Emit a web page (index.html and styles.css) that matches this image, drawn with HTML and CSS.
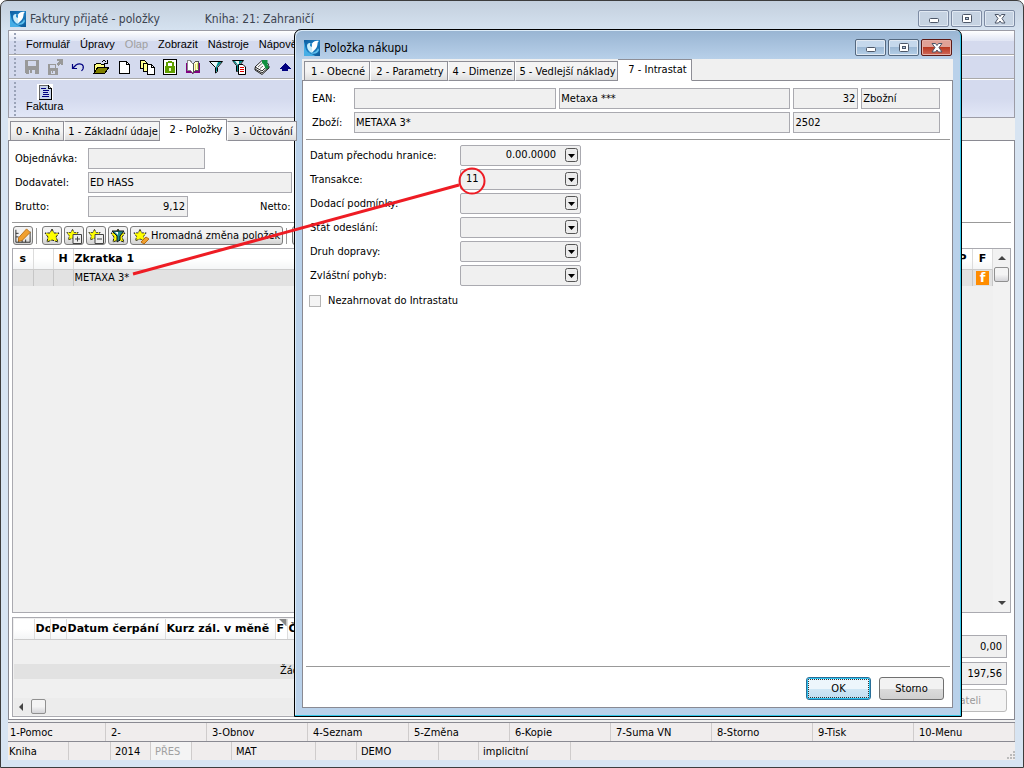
FILE: index.html
```html
<!DOCTYPE html>
<html lang="cs">
<head>
<meta charset="utf-8">
<title>Faktury přijaté - položky</title>
<link rel="stylesheet" href="styles.css">
</head>
<body>
<svg width="0" height="0" class="defs" aria-hidden="true">
  <defs>
    <linearGradient id="logo-bg" x1="0" y1="0" x2="1" y2="1">
      <stop offset="0" stop-color="#0d5c9e"/><stop offset=".5" stop-color="#1c7fc4"/><stop offset="1" stop-color="#0b5796"/>
    </linearGradient>
    <symbol id="logo" viewBox="0 0 16 16">
      <rect width="16" height="16" fill="url(#logo-bg)"/>
      <path d="M0 2C1 3 1 9 3 11C5 14 9 14 11 16H0Z" fill="#45aee6"/>
      <path d="M3 6C3 3 6 2 8 4C9 1 13 1 13 4C14 8 10 10 8 13C5 12 3 9 3 6Z" fill="#c9ecfa"/>
      <path d="M8 4C9 1 13 0 15 1C13 2 14 4 13 6C12 9 9 10 8 12C9 9 7 7 8 4Z" fill="#fff"/>
      <path d="M6 3L8 4V7L6 6Z" fill="#2a8acb"/>
      <path d="M4 12C8 14 13 12 14 8L15 10C14 14 9 15 4 12Z" fill="#5cc0ee"/>
    </symbol>
    <symbol id="star" viewBox="0 0 16 16">
      <path d="M8 1L10 5L15 5L12 9L14 14L8 12L3 14L4 9L1 5L6 5Z" fill="#ff0" stroke="#222" stroke-width="1" stroke-dasharray="3 1"/>
    </symbol>
    <symbol id="min" viewBox="0 0 12 10"><rect x="1.500" y="4.500" width="9" height="4" rx="1" fill="#fff" stroke="#4d5768"/></symbol>
    <symbol id="max" viewBox="0 0 12 10"><rect x="1.500" y=".5" width="9" height="8" rx="1" fill="#fff" stroke="#4d5768"/><rect x="4.500" y="3.500" width="3" height="2" fill="#b6c8de" stroke="#4d5768"/></symbol>
    <symbol id="close" viewBox="0 0 12 10"><path d="M1 .5H4.500L6 2.500L7.500 .5H11L8 4.500L11 9H7.500L6 7L4.500 9H1L4 4.500Z" fill="#fff" stroke="#4d5768"/></symbol>
    <symbol id="drop" viewBox="0 0 15 15">
      <rect x=".5" y=".5" width="12" height="13" rx="2" fill="#ececec" stroke="#555"/>
      <path d="M3 6H10L6.500 10Z" fill="#000"/>
    </symbol>
  </defs>
</svg>

<div class="window">
  <header class="titlebar">
    <svg class="logo"><use href="#logo"/></svg>
    <span class="title">Faktury přijaté - položky</span>
    <span class="subtitle">Kniha: 21: Zahraničí</span>
    <span class="winbuttons">
      <button aria-label="Minimalizovat"><svg><use href="#min"/></svg></button>
      <button aria-label="Maximalizovat"><svg><use href="#max"/></svg></button>
      <button aria-label="Zavřít"><svg><use href="#close"/></svg></button>
    </span>
  </header>

  <div class="client">
    <div class="bars">
      <nav class="menu">
        <button>Formulář</button><button>Úpravy</button><button disabled>Olap</button><button>Zobrazit</button><button>Nástroje</button><button>Nápověda</button>
      </nav>
      <div class="tools">
        <button aria-label="Uložit"><svg viewBox="0 0 16 16"><path d="M1 1H15V15H2L1 14Z" fill="#999"/><path d="M4 2H12V7H4ZM5 11H11V15H5Z" fill="#d3d9ec"/><path d="M6 11H8V14H6Z" fill="#999"/></svg></button>
        <button aria-label="Uložit a zavřít"><svg viewBox="0 0 16 16"><path d="M1 5H9V9H11V16H1ZM10 0H16V6H14V4L11 7L9 5L12 2H10Z" fill="#999"/><path d="M3 6H8V9H3ZM4 12H8V15H4Z" fill="#d3d9ec"/><path d="M5 12H6V14H5Z" fill="#999"/></svg></button>
        <button aria-label="Zpět"><svg viewBox="0 0 16 16" class="smooth"><path d="M2.500 5V9.500H7M3 9L6 6Q9 4 12 5.500Q14 7 13 10L11.500 12" fill="none" stroke="#000080" stroke-width="1.200"/></svg></button>
        <button aria-label="Otevřít"><svg viewBox="0 0 16 16"><path d="M1 14V5H3L4 4H7L8 5H11V8" fill="#ffff80" stroke="#000"/><path d="M1 14L5 8H16L12 14Z" fill="#808000" stroke="#000"/><path d="M9 3Q11 0 13 3M14 1V4H11" fill="none" stroke="#000"/></svg></button>
        <button aria-label="Nový"><svg viewBox="0 0 16 16"><path d="M3 2H10L13 5V14H3Z" fill="#fff" stroke="#000"/><path d="M10 2V5H13" fill="none" stroke="#000"/></svg></button>
        <button aria-label="Kopírovat"><svg viewBox="0 0 16 16"><path d="M1 1H5L7 3V9H1Z" fill="#ffff90" stroke="#000"/><path d="M4 4H8L10 6V12H4Z" fill="#ffff90" stroke="#000"/><path d="M8 5H12L15 8V15H8Z" fill="#fff" stroke="#000"/><path d="M12 5V8H15" fill="none" stroke="#000"/></svg></button>
        <button aria-label="Zámek"><svg viewBox="0 0 16 16"><rect x="1" y="0" width="14" height="16" fill="#000"/><rect x="2" y="1" width="12" height="14" fill="#fff"/><rect x="3" y="7" width="10" height="7" fill="#5f9e00"/><path d="M5 8V5Q5 3 8 3Q11 3 11 5V8" fill="none" stroke="#5f9e00" stroke-width="2"/><path d="M7 9H9V12H7Z" fill="#e8f4c0"/></svg></button>
        <button aria-label="Kniha"><svg viewBox="0 0 16 16"><path d="M2 4V13H7L8 14L9 13H14V4" fill="#800080" stroke="#800080" stroke-width="2"/><path d="M2 2L5 1L8 5V14L5 11H2Z" fill="#fff" stroke="#888"/><path d="M8 5L11 2H13V11H11L8 14Z" fill="#ffffd0" stroke="#555"/><path d="M10 5V11M12 4V10" stroke="#dd6"/></svg></button>
        <button aria-label="Filtr"><svg viewBox="0 0 16 16" class="smooth"><path d="M1.500 2.500H14.500L9.500 8.500V12.500L7.500 14V8.500Z" fill="#e9fafa" stroke="#000"/><path d="M10 3H13.500L9 8V12L8 13V8Z" fill="#008c8c"/></svg></button>
        <button aria-label="Filtr seznamu"><svg viewBox="0 0 16 16" class="smooth"><path d="M1.500 1.500H12.500L8.500 6.500V11.500L5.500 12.500V6.500Z" fill="#e9fafa" stroke="#000"/><path d="M8 2H11.500L8 6Z M2 2H4L7 6V12L6 12V6Z" fill="#008c8c"/><path d="M7.500 5.500H12L14.500 8V15.500H7.500Z" fill="#fff" stroke="#000"/><path d="M9 8.500H13M9 10.500H13M9 12.500H13" stroke="#d00"/></svg></button>
        <button aria-label="Tisk"><svg viewBox="0 0 16 16" class="smooth"><path d="M1 8.500V11L8 15.500L15 9V7Z" fill="#fff" stroke="#222"/><path d="M1 8L8 1.500L15 5.500L8 12Z" fill="#fff" stroke="#222"/><path d="M1 10L8 14L15 8" fill="none" stroke="#222"/><path d="M8 1H13.500V6L15 8.500L12 10.500L10 6L8 4Z" fill="#109040"/><path d="M4 8L8 4.500M6 9.500L9 7" stroke="#666"/></svg></button>
        <button aria-label="Nahoru"><svg viewBox="0 0 16 16"><path d="M8 4L14 10H11V12H5V10H2Z" fill="#000080"/></svg></button>
      </div>
      <div class="forms">
        <button><svg viewBox="0 0 16 16"><rect width="16" height="16" fill="#fff"/><path d="M2 1H11L14 4V15H2Z" fill="#c8d4ec" stroke="#666"/><path d="M14 4V15H2" fill="none" stroke="#000"/><path d="M11 1V4H14" fill="none" stroke="#000"/><path d="M4 4H9M6 6H12M6 8H11M6 10H12M5 12H12" stroke="#000080"/></svg><span>Faktura</span></button>
      </div>
    </div>

    <div class="tabs main-tabs" role="tablist">
      <button role="tab" class="t54">0 - Kniha</button><button role="tab" class="t95">1 - Základní údaje</button><button role="tab" class="t67 active">2 - Položky</button><button role="tab" class="t70">3 - Účtování</button>
    </div>

    <main class="panel">
      <div class="head-form">
        <label for="obj">Objednávka:</label><input id="obj" class="w117" readonly>
        <label for="dod">Dodavatel:</label><input id="dod" class="w204" value="ED HASS" readonly>
        <label for="bru">Brutto:</label><span class="pair"><input id="bru" class="w100 num" value="9,12" readonly><label for="net">Netto:</label><input id="net" class="w100 num" readonly></span>
      </div>

      <div class="actions">
        <button class="icon" aria-label="Upravit"><svg viewBox="0 0 18 16"><path d="M1 1V15H17V3M4 15V12M8 15V12M12 15V12M1 5H4M1 9H4" fill="none" stroke="#222"/><path d="M4 10L13 0L17 4L8 13L4 14Z" fill="#f0a030" stroke="#b86c10"/></svg></button>
        <i class="vsep"></i>
        <button class="icon" aria-label="Nová položka"><svg><use href="#star"/></svg></button>
        <button class="icon" aria-label="Přidat"><svg viewBox="0 0 16 16"><use href="#star" width="13" height="14"/><path d="M7 6.500H15.500V15.500H7ZM9 11H14M11.500 8.500V13.500" fill="#eee" stroke="#444"/></svg></button>
        <button class="icon" aria-label="Odebrat"><svg viewBox="0 0 16 16"><use href="#star" width="13" height="14"/><path d="M7 6.500H15.500V15.500H7ZM9 11H14" fill="#eee" stroke="#444"/></svg></button>
        <button class="icon" aria-label="Filtr položek"><svg viewBox="0 0 16 16"><use href="#star" width="16" height="16"/><path d="M2 3H14L10 8V12L7 14V8Z" fill="#208c8c" stroke="#111"/><path d="M5 4H8V7Z" fill="#fff"/></svg></button>
        <button class="wide"><svg viewBox="0 0 16 16"><use href="#star" width="14" height="15"/><path d="M8 14L13 9L16 11L11 16Z" fill="#f0a030" stroke="#b86c10"/></svg>Hromadná změna položek</button>
        <i class="vsep"></i>
        <button class="icon" aria-label="Další"></button>
      </div>

      <div class="grid-box">
        <table class="items">
          <colgroup><col class="c20"><col class="c20"><col class="c20"><col><col class="c20"><col class="c20"></colgroup>
          <thead><tr><th>s</th><th></th><th>H</th><th class="left">Zkratka 1</th><th>P</th><th>F</th></tr></thead>
          <tbody><tr><td></td><td></td><td></td><td class="left">METAXA 3*</td><td></td><td><span class="flag">f</span></td></tr></tbody>
        </table>
        <div class="vscroll"><svg viewBox="0 0 8 4"><path d="M0 4L4 0L8 4Z"/></svg><i class="thumb"></i><svg viewBox="0 0 8 4" class="end"><path d="M0 0L4 4L8 0Z"/></svg></div>
      </div>

      <div class="lower">
        <div class="sub-box">
          <table class="sub">
            <colgroup><col class="c20"><col class="c16"><col class="c16"><col class="c99"><col class="c110"><col class="c12"><col></colgroup>
            <thead><tr><th></th><th>Do</th><th>Po</th><th>Datum čerpání</th><th>Kurz zál. v měně</th><th class="sorted">F</th><th>Č</th></tr></thead>
          </table>
          <div class="empty">Žádné záznamy</div>
          <div class="hscroll"><svg viewBox="0 0 4 8"><path d="M4 0L0 4L4 8Z"/></svg><i class="thumb"></i></div>
        </div>
        <div class="totals">
          <input class="num" value="0,00" aria-label="Součet" readonly>
          <input class="num" value="197,56" aria-label="Celkem" readonly>
          <button disabled>Dodavateli</button>
        </div>
      </div>
    </main>

    <footer class="status">
      <div class="keys"><span>1-Pomoc</span><span>2-</span><span>3-Obnov</span><span>4-Seznam</span><span>5-Změna</span><span>6-Kopie</span><span>7-Suma VN</span><span>8-Storno</span><span>9-Tisk</span><span>10-Menu</span></div>
      <div class="state"><span class="s61">Kniha</span><span class="s42"></span><span class="s40">2014</span><span class="s41 dim">PŘES</span><span class="s40"></span><span class="s84">MAT</span><span class="s41"></span><span class="s82">DEMO</span><span class="s40"></span><span class="s92">implicitní</span><span class="rest"><svg viewBox="0 0 9 9"><path d="M7 0h2v2h-2zM7 3h2v2h-2zM4 3h2v2h-2zM7 6h2v2h-2zM4 6h2v2h-2zM1 6h2v2h-2z" fill="#bbb"/></svg></span></div>
    </footer>
  </div>
</div>

<section class="dialog" role="dialog" aria-label="Položka nákupu">
  <header class="titlebar">
    <svg class="logo"><use href="#logo"/></svg>
    <span class="title">Položka nákupu</span>
    <span class="winbuttons">
      <button aria-label="Minimalizovat"><svg><use href="#min"/></svg></button>
      <button aria-label="Maximalizovat"><svg><use href="#max"/></svg></button>
      <button class="red" aria-label="Zavřít"><svg><use href="#close"/></svg></button>
    </span>
  </header>
  <div class="dlg-body">
    <div class="tabs" role="tablist">
      <button role="tab" class="t66">1 - Obecné</button><button role="tab" class="t78">2 - Parametry</button><button role="tab" class="t67">4 - Dimenze</button><button role="tab" class="t103">5 - Vedlejší náklady</button><button role="tab" class="t74 active">7 - Intrastat</button>
    </div>
    <div class="dlg-panel">
      <div class="ident">
        <label for="ean">EAN:</label>
        <input id="ean" readonly>
        <input value="Metaxa ***" aria-label="Název" readonly>
        <input class="num" value="32" aria-label="Číslo" readonly>
        <input value="Zbožní" aria-label="Druh" readonly>
        <label for="zbo">Zboží:</label>
        <input id="zbo" class="span2" value="METAXA 3*" readonly>
        <input class="span2" value="2502" aria-label="Kód" readonly>
      </div>
      <div class="fields">
        <label for="f1">Datum přechodu hranice:</label><span class="combo"><select id="f1" class="num"><option>0.00.0000</option></select><svg><use href="#drop"/></svg></span>
        <label for="f2">Transakce:</label><span class="combo"><select id="f2"><option>11</option></select><svg><use href="#drop"/></svg></span>
        <label for="f3">Dodací podmínky:</label><span class="combo"><select id="f3"><option></option></select><svg><use href="#drop"/></svg></span>
        <label for="f4">Stát odeslání:</label><span class="combo"><select id="f4"><option></option></select><svg><use href="#drop"/></svg></span>
        <label for="f5">Druh dopravy:</label><span class="combo"><select id="f5"><option></option></select><svg><use href="#drop"/></svg></span>
        <label for="f6">Zvláštní pohyb:</label><span class="combo"><select id="f6"><option></option></select><svg><use href="#drop"/></svg></span>
      </div>
      <label class="check"><input type="checkbox">Nezahrnovat do Intrastatu</label>
      <div class="buttons"><button class="ok">OK</button><button>Storno</button></div>
    </div>
  </div>
</section>

<svg class="note" viewBox="0 0 370 125" aria-hidden="true"><path d="M8 114L334 25" stroke="#ee1c24" stroke-width="3"/><circle cx="347" cy="21" r="12.500" fill="none" stroke="#ee1c24" stroke-width="2"/></svg>
</body>
</html>
```
FILE: styles.css
```css
* { box-sizing: border-box; }
html, body { height: 100%; }
body {
  margin: 0;
  background: #fff;
  font: 11px/14px "DejaVu Sans Condensed", "Noto Sans", sans-serif;
  color: #000;
  position: relative;
  overflow: hidden;
}
button, input, select { font: inherit; color: inherit; margin: 0; }
button { padding: 0; border: 0; background: none; white-space: nowrap; }
label { white-space: nowrap; }
.defs { position: absolute; }

/* windows */
.window {
  height: 100%;
  display: flex;
  flex-direction: column;
  padding: 0 8px 7px 7px;
  border: 1px solid #3c3c3c;
  border-radius: 7px 7px 0 0;
  background: linear-gradient(#c3cfdd, #d7e4f2 32px);
}
.titlebar { display: flex; align-items: center; height: 29px; flex: none; padding: 7px 0 1px 2px; font-size: 12px; }
.titlebar .logo { width: 16px; height: 16px; margin-right: 4px; }
.window > .titlebar { color: #3c4450; }
.subtitle { margin-left: 45px; }
.winbuttons { margin-left: auto; display: flex; gap: 2px; }
.winbuttons button {
  width: 31px; height: 17px;
  display: grid; place-items: center;
  border: 1px solid #7d8ba3; border-radius: 2px;
  background: #c6d3e2;
  box-shadow: inset 0 0 0 1px #e1e9f3;
}
.winbuttons svg { width: 12px; height: 10px; }
.client { flex: 1; min-height: 0; display: flex; flex-direction: column; background: #f0f0f0; }

.bars { border: 1px solid #9c9ca6; flex: none; }
.bars > * { --grip: radial-gradient(circle at 1px 1px, #9aa3b8 1px, transparent 1px) 5px 2px / 4px 4px repeat-y; display: flex; align-items: center; padding-left: 11px; background: var(--grip), #d4daee; }
.bars .menu { height: 24px; border-bottom: 1px solid #a9a9a9; font: 11px/14px "Liberation Sans", sans-serif; padding: 3px 0 0 17px; gap: 10px; background: var(--grip), linear-gradient(#fff, #e0e5f4 10px, #d4daee 10px); }
.menu button:disabled { color: #a0a0a0; }
.tools { height: 24px; border-top: 1px solid #fff; border-bottom: 1px solid #a9a9a9; }
.tools button { width: 23px; height: 20px; display: grid; place-items: center; }
.tools svg { width: 16px; height: 16px; shape-rendering: crispEdges; }
.tools .smooth { shape-rendering: auto; }
.bars .forms { height: 38px; border-top: 1px solid #fff; font: 11px/13px "Liberation Sans", sans-serif; background: var(--grip), linear-gradient(#d4daee 50%, #e2e7f7); }
.forms button { display: flex; flex-direction: column; align-items: center; padding-left: 6px; }
.forms svg { width: 16px; height: 16px; shape-rendering: crispEdges; }

/* tabs */
.tabs { display: flex; align-items: flex-end; height: 22px; flex: none; padding-left: 2px; position: relative; z-index: 1; }
.tabs button {
  height: 20px;
  border: 1px solid #8e8e96; border-left-color: #fff;
  background: linear-gradient(#f4f4f4 50%, #dedede);
  padding: 2px 0 0 2px;
}
.tabs button:first-child { border-left-color: #8e8e96; }
.tabs .active { height: 22px; background: #fff; border-bottom-color: #fff; border-left: 0; padding: 0 0 1px 6px; }
.main-tabs { margin-top: 1px; }
.t54 { width: 54px; } .t95 { width: 96px; } .t66 { width: 66px; } .t67 { width: 67px; }
.t70 { width: 70px; } .t78 { width: 78px; } .t103 { width: 103px; } .t74 { width: 74px; }

/* fields */
input:not([type]), select { height: 21px; min-width: 0; border: 1px solid #aaaab0; background: #f0f0f0; padding: 0 2px 1px 1px; border-radius: 0; outline: 0; }
.num { text-align: right; text-align-last: right; }
.w117 { width: 117px; } .w204 { width: 204px; } .w100 { width: 100px; }

.panel { flex: 1; min-height: 0; display: flex; flex-direction: column; margin-top: -1px; padding: 0 3px 2px 3px; border: 1px solid #8a8a92; background: #fff; }
.head-form { display: grid; grid-template-columns: 73px 1fr; row-gap: 3px; align-items: center; padding: 7px 0 5px 3px; border-bottom: 1px solid #999; flex: none; }
.pair { display: flex; align-items: center; }
.pair label { margin: 0 9px 0 72px; }

.actions { display: flex; align-items: center; gap: 2px; height: 25px; flex: none; padding-left: 1px; }
.actions .icon { width: 20px; height: 19px; }
.actions button { border: 1px solid #7c7c7c; border-radius: 3px; background: linear-gradient(#f2f2f2 50%, #d2d2d2); display: flex; align-items: center; justify-content: center; }
.actions svg { width: 16px; height: 16px; flex: none; }
.actions .wide { height: 19px; gap: 2px; padding: 0 2px; }
.vsep { width: 1px; height: 16px; background: #999; margin: 0 3px 0 1px; }

/* grids */
.grid-box { flex: 1; min-height: 0; display: flex; align-items: flex-start; border: 1px solid #aaaab0; background: #f0f0f0; }
table { flex: 1; min-width: 0; table-layout: fixed; border-collapse: collapse; }
th { height: 20px; padding: 0 1px; font: bold 11px/16px "DejaVu Sans", sans-serif; background: linear-gradient(#fff 50%, #f4f5f6); border-right: 1px solid #dcdcdc; border-bottom: 1px solid #ccc; overflow: hidden; white-space: nowrap; }
td { height: 17px; padding: 1px 1px 0; text-align: center; background: #e2e2e2; border-right: 1px solid #c6c6c6; line-height: 14px; }
.left, .sub th { text-align: left; }
.c20 { width: 20px; } .c16 { width: 16px; } .c99 { width: 99px; } .c110 { width: 110px; } .c12 { width: 12px; }
.flag { display: block; width: 13px; height: 14px; margin: auto; background: #ff8c00; color: #fff; font: bold 13px/14px "DejaVu Sans", sans-serif; }
.vscroll { width: 17px; align-self: stretch; display: flex; flex-direction: column; align-items: center; padding: 7px 0; background: #f2f2f2; }
.vscroll svg { width: 8px; height: 4px; fill: #444; }
.vscroll .end { margin-top: auto; }
.thumb { width: 15px; height: 15px; border: 1px solid #909090; border-radius: 2px; background: linear-gradient(#f4f4f4 50%, #d4d4d8); }
.vscroll .thumb { margin-top: 7px; }

.lower { height: 100px; flex: none; display: flex; margin-top: 4px; }
.sub-box { flex: 1; min-width: 0; display: flex; flex-direction: column; border: 1px solid #aaaab0; background: #f0f0f0; padding: 1px; }
.sub { flex: none; width: 100%; }
.sub .sorted { background: linear-gradient(225deg, #888 5px, #fff 5px); }
.empty { margin-top: 24px; padding-left: 266px; height: 15px; background: #e2e2e2; }
.hscroll { margin-top: auto; height: 17px; display: flex; align-items: center; gap: 8px; padding-left: 5px; background: #ececec; }
.hscroll svg { width: 4px; height: 8px; fill: #444; }
.totals { width: 170px; flex: none; display: flex; flex-direction: column; gap: 4px; padding: 18px 4px 4px 8px; }
.totals .num { height: 23px; padding-right: 4px; width: 100%; }
.totals button { height: 23px; border: 1px solid #bbb; border-radius: 3px; background: #f4f4f4; color: #999; text-align: right; padding-right: 25px; }

/* status */
.status { flex: none; margin-top: 2px; background: #f0eded; }
.status > div { display: flex; height: 19px; border-top: 1px solid #8a8a92; align-items: stretch; }
.status span { border-right: 1px solid #cfcccc; padding: 3px 0 0 2px; white-space: nowrap; }
.keys span { flex: 1; }
.status .keys span:not(:first-child) { padding-left: 5px; }
.status .state span:not(:first-child) { padding-left: 4px; }
.status .state span:first-child { padding-left: 1px; }
.s61 { width: 61px; } .s42 { width: 42px; } .s40 { width: 40px; } .s41 { width: 41px; } .s84 { width: 84px; } .s82 { width: 82px; } .s92 { width: 92px; }
.dim { color: #a0a0a0; background: #f4f4f4; }
.status .rest { flex: 1; border: 0; display: flex; justify-content: flex-end; align-items: flex-end; }
.rest svg { width: 9px; height: 9px; }

/* dialog */
.dialog {
  position: absolute; left: 294px; right: 62px; top: 29px; bottom: 51px;
  display: flex; flex-direction: column;
  padding: 0 8px 8px 7px;
  border: 1px solid #000; border-radius: 7px 7px 0 0;
  background: linear-gradient(#98b4d2, #b9d1ea 30px);
  box-shadow: inset -1px -1px #35c8ea, inset 1px 1px #dcebf8;
}
.dialog .titlebar { height: 29px; padding: 6px 1px 0 2px; }
.dialog .winbuttons button { border-color: #54687f; background: linear-gradient(#c5d8ec 50%, #9db9d5 50%, #b5cfe8); }
.dialog .winbuttons .red { border-color: #5c1a16; background: linear-gradient(#e0a196 50%, #b93a22 50%, #d0695a); box-shadow: inset 0 0 0 1px #e6b0a6; }
.dlg-body { flex: 1; min-height: 0; display: flex; flex-direction: column; background: #f0f0f0; }
.dlg-panel { flex: 1; min-height: 0; display: flex; flex-direction: column; margin-top: -1px; padding: 7px 2px 7px 3px; border: 1px solid #8a8a92; background: #fff; }
.ident { display: grid; grid-template-columns: 39px 203fr 232fr 65fr 79fr; gap: 3px; align-items: center; padding: 0 10px 6px 6px; border-bottom: 1px solid #999; }
.span2 { grid-column: span 2; }
.fields { display: grid; grid-template-columns: 150px 121px; row-gap: 3px; align-items: center; padding: 5px 0 0 4px; }
.combo { position: relative; display: grid; }
.combo select { appearance: none; border-radius: 2px; padding: 0 24px 1px 5px; }
.combo svg { position: absolute; right: 1px; top: 3px; width: 15px; height: 15px; pointer-events: none; }
.check { display: flex; align-items: center; gap: 7px; padding: 8px 0 0 3px; }
.check input { appearance: none; width: 12px; height: 12px; border: 1px solid #b4b4b4; background: #f4f4f4; }
.buttons { margin-top: auto; display: flex; justify-content: flex-end; gap: 8px; padding: 10px 6px 0 0; border-top: 1px solid #999; }
.buttons button { width: 65px; height: 23px; border: 1px solid #707070; border-radius: 3px; background: linear-gradient(#f2f2f2 50%, #dcdcdc 50%, #d0d0d0); }
.buttons .ok { border-color: #2a6f98; background: linear-gradient(#edf6fc 50%, #d0e7f5 50%, #c0ddf0); box-shadow: inset 0 0 0 1px #2cc4f2; outline: 1px dotted #333; outline-offset: -3px; }

.note { position: absolute; left: 125px; top: 160px; width: 370px; height: 125px; pointer-events: none; }
```
